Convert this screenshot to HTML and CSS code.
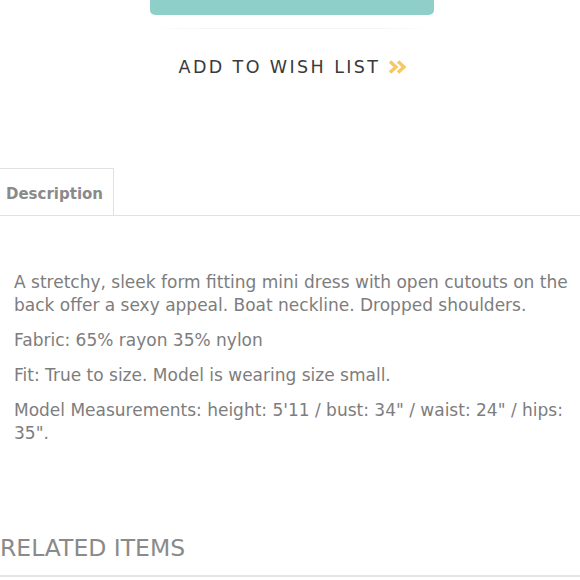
FILE: index.html
```html
<!DOCTYPE html>
<html>
<head>
<meta charset="utf-8">
<link rel="stylesheet" href="styles.css">
</head>
<body>
<div class="actions">
  <div class="cart-btn"></div>
  <div class="cart-shadow"></div>
  <a class="wish">ADD TO WISH LIST <svg class="chev" width="20" height="14" viewBox="0 0 20 14"><path d="M2 1.5 L8 7 L2 12.5 M10 1.5 L16 7 L10 12.5" fill="none" stroke="#f6c863" stroke-width="3.4" stroke-linejoin="miter"/></svg></a>
</div>
<div class="tabs">
  <div class="tab">Description</div>
</div>
<div class="desc">
  <p>A stretchy, sleek form fitting mini dress with open cutouts on the back offer a sexy appeal. Boat neckline. Dropped shoulders.</p>
  <p>Fabric: 65% rayon 35% nylon</p>
  <p>Fit: True to size. Model is wearing size small.</p>
  <p>Model Measurements: height: 5'11 / bust: 34" / waist: 24" / hips: 35".</p>
</div>
<h2 class="related">RELATED ITEMS</h2>
</body>
</html>
```
FILE: styles.css
```css
html, body {
  margin: 0;
  padding: 0;
  background: #fff;
  font-family: "DejaVu Sans", sans-serif;
}
.actions {
  display: flex;
  flex-direction: column;
  align-items: center;
}
.cart-btn {
  width: 284px;
  height: 15px;
  margin-left: 4px;
  background: #8fcfca;
  border-radius: 0 0 5px 5px;
}
.cart-shadow {
  width: 284px;
  height: 1px;
  margin-top: 13px;
  margin-left: 4px;
  background: linear-gradient(to right, #fff, #f4f4f4 20%, #f4f4f4 80%, #fff);
}
.wish {
  margin-top: 28px;
  margin-left: 7px;
  font-size: 17.5px;
  letter-spacing: 2.4px;
  color: #3a3a3a;
  line-height: 20px;
  display: flex;
  align-items: center;
}
.chev {
  margin-left: 8px;
  display: block;
}
.tabs {
  margin-top: 91px;
  border-bottom: 1px solid #e1e1e1;
  display: flex;
}
.tab {
  border: 1px solid #e1e1e1;
  border-left: none;
  border-bottom: none;
  width: 114px;
  box-sizing: border-box;
  height: 47px;
  padding-left: 6px;
  padding-top: 2px;
  font-size: 15px;
  font-weight: bold;
  color: #8a8a8a;
  line-height: 47px;
}
.desc {
  padding: 0 6px 0 14px;
  margin-top: 55px;
  color: #7d7d7d;
  font-size: 17px;
  line-height: 23px;
}
.desc p {
  margin: 0 0 12px 0;
}
.related {
  margin: 90px 0 0 0;
  padding-bottom: 14px;
  border-bottom: 2px solid #e6e6e6;
  font-size: 23.5px;
  font-weight: normal;
  color: #8a8a8a;
  line-height: 26px;
}
```
